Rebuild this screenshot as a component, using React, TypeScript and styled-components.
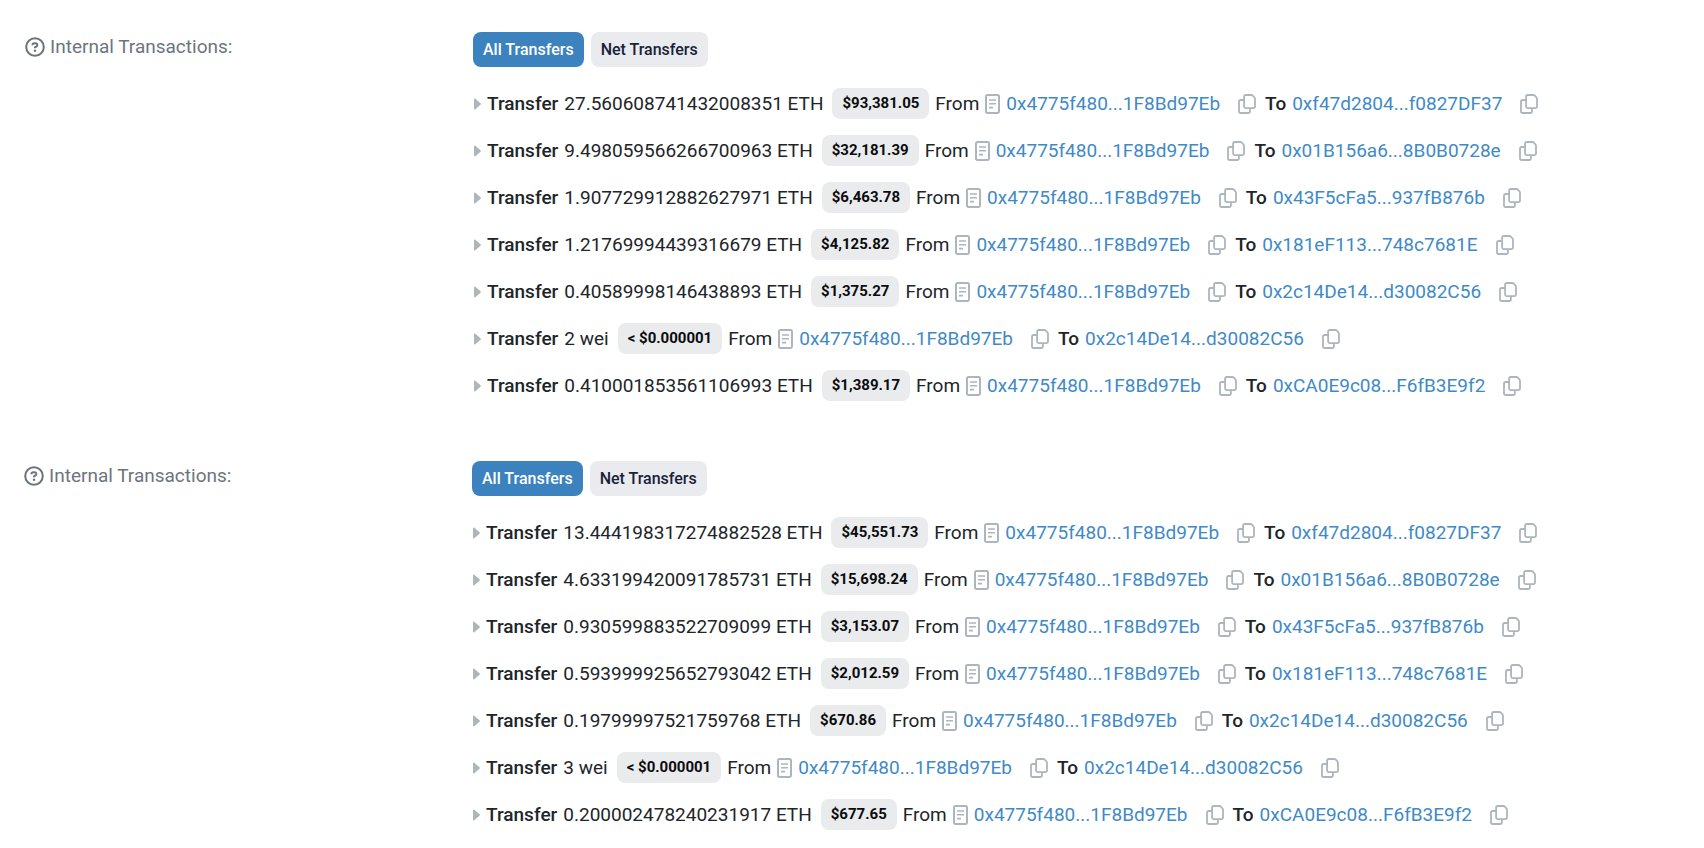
import React from 'react';
import styled, { createGlobalStyle } from 'styled-components';

const GlobalStyle = createGlobalStyle`
  *, *::before, *::after { box-sizing: border-box; }
  body {
    margin: 0;
    background: #fff;
    color: #212529;
    font-family: Roboto, sans-serif;
    font-size: 19px;
    line-height: 28px;
  }
`;

const Page = styled.main`
  display: flex;
  flex-direction: column;
  gap: 52px;
  padding: 32px 24px 8px 25px;
`;

const Section = styled.section<{ $shift?: boolean }>`
  display: grid;
  grid-template-columns: 448px minmax(0, 1fr);
  margin-left: ${(p) => (p.$shift ? '-1px' : '0')};
`;

const Heading = styled.h2`
  display: flex;
  align-items: center;
  gap: 5px;
  height: 30px;
  margin: 0;
  color: #6c757d;
  font-size: 19px;
  font-weight: 400;
`;

const Tabs = styled.div`
  display: flex;
  gap: 7px;
  margin-bottom: 13px;
`;

const Tab = styled.button<{ $active?: boolean }>`
  height: 35px;
  padding: 0 10px;
  border: 0;
  border-radius: 8px;
  background: ${(p) => (p.$active ? '#3b82bf' : '#e9ebee')};
  color: ${(p) => (p.$active ? '#fff' : '#1a2238')};
  font: 500 16px/32px Roboto, sans-serif;
  white-space: nowrap;
  cursor: pointer;
`;

const List = styled.ul`
  margin: 0;
  padding: 0;
  list-style: none;
`;

const Row = styled.li`
  display: flex;
  align-items: center;
  gap: 6px;
  height: 47px;
  white-space: nowrap;
`;

const Strong = styled.span`
  font-weight: 500;
`;

const Amount = styled.span`
  margin-right: 3px;
`;

const Badge = styled.span`
  height: 31px;
  padding: 0 10px;
  border-radius: 8px;
  background: #e9ebed;
  color: #0b0c0e;
  font-size: 15px;
  font-weight: 700;
  line-height: 30px;
`;

const Address = styled.a`
  color: #3f8ac6;
  text-decoration: none;
`;

const CopyButton = styled.button`
  display: flex;
  margin: 0 3px 0 12px;
  padding: 0;
  border: 0;
  background: none;
  color: #adb5bd;
  cursor: pointer;
`;

const Icon = styled.svg`
  display: block;
  flex: none;
  fill: none;
  stroke: currentColor;
`;

const MutedIcon = styled(Icon)`
  color: #adb5bd;
`;

const HelpIcon = () => (
  <Icon width="20" height="20" viewBox="0 0 20 20" strokeWidth="2" aria-hidden="true">
    <circle cx="10" cy="10" r="8.8" />
    <path d="M7.500 8.200V7.800c0-1 .8-1.600 1.800-1.600h1.100c1.100 0 1.900.7 1.900 1.700 0 .8-.4 1.300-1.100 1.700l-1.200.7v1" />
    <circle cx="10" cy="13.800" r="1.200" fill="currentColor" stroke="none" />
  </Icon>
);

const ArrowIcon = () => (
  <MutedIcon width="8" height="12" viewBox="0 0 8 12" aria-hidden="true">
    <path d="M1 1.200v9.600c0 .7.8.9 1.300.5l5.200-4.600c.5-.4.5-1 0-1.400L2.300.7C1.800.3 1 .5 1 1.200z" fill="currentColor" stroke="none" />
  </MutedIcon>
);

const ContractIcon = () => (
  <MutedIcon width="15" height="20" viewBox="0 0 15 20" strokeWidth="2" aria-hidden="true">
    <rect x="1" y="1" width="13" height="18" rx="1.4" />
    <path d="M4 6h7M4 9.800h7M4 13.600h4" strokeWidth="1.6" />
  </MutedIcon>
);

const CopyIcon = () => (
  <Icon width="18" height="20" viewBox="0 0 18 20" strokeWidth="1.8" aria-hidden="true">
    <path d="M7.900 1h5.400c.5 0 1 .2 1.300.5l1.800 1.900c.4.4.6.8.6 1.300v7.600c0 1-.8 1.800-1.800 1.800H7.900c-1 0-1.800-.8-1.800-1.800V2.800c0-1 .8-1.800 1.800-1.800z" />
    <path d="M6.100 6H2.800C1.800 6 1 6.800 1 7.800V17.200c0 1 .8 1.800 1.800 1.800h7.300c1 0 1.800-.8 1.800-1.800v-3" />
  </Icon>
);

type Transfer = { amount: string; value: string; to: string };

const SENDER = '0x4775f480...1F8Bd97Eb';

const groups: Transfer[][] = [
  [
    { amount: '27.560608741432008351 ETH', value: '$93,381.05', to: '0xf47d2804...f0827DF37' },
    { amount: '9.498059566266700963 ETH', value: '$32,181.39', to: '0x01B156a6...8B0B0728e' },
    { amount: '1.907729912882627971 ETH', value: '$6,463.78', to: '0x43F5cFa5...937fB876b' },
    { amount: '1.21769994439316679 ETH', value: '$4,125.82', to: '0x181eF113...748c7681E' },
    { amount: '0.40589998146438893 ETH', value: '$1,375.27', to: '0x2c14De14...d30082C56' },
    { amount: '2 wei', value: '< $0.000001', to: '0x2c14De14...d30082C56' },
    { amount: '0.410001853561106993 ETH', value: '$1,389.17', to: '0xCA0E9c08...F6fB3E9f2' },
  ],
  [
    { amount: '13.444198317274882528 ETH', value: '$45,551.73', to: '0xf47d2804...f0827DF37' },
    { amount: '4.633199420091785731 ETH', value: '$15,698.24', to: '0x01B156a6...8B0B0728e' },
    { amount: '0.930599883522709099 ETH', value: '$3,153.07', to: '0x43F5cFa5...937fB876b' },
    { amount: '0.593999925652793042 ETH', value: '$2,012.59', to: '0x181eF113...748c7681E' },
    { amount: '0.19799997521759768 ETH', value: '$670.86', to: '0x2c14De14...d30082C56' },
    { amount: '3 wei', value: '< $0.000001', to: '0x2c14De14...d30082C56' },
    { amount: '0.200002478240231917 ETH', value: '$677.65', to: '0xCA0E9c08...F6fB3E9f2' },
  ],
];

const TransferRow = ({ amount, value, to }: Transfer) => (
  <Row>
    <ArrowIcon />
    <Strong>Transfer</Strong>
    <Amount>{amount}</Amount>
    <Badge>{value}</Badge>
    <span>From</span>
    <ContractIcon />
    <Address href="#">{SENDER}</Address>
    <CopyButton type="button" aria-label="Copy sender address">
      <CopyIcon />
    </CopyButton>
    <Strong>To</Strong>
    <Address href="#">{to}</Address>
    <CopyButton type="button" aria-label="Copy recipient address">
      <CopyIcon />
    </CopyButton>
  </Row>
);

export default function App() {
  return (
    <>
      <GlobalStyle />
      <Page>
        {groups.map((transfers, index) => (
          <Section key={index} $shift={index > 0}>
            <Heading>
              <HelpIcon />
              Internal Transactions:
            </Heading>
            <div>
              <Tabs>
                <Tab type="button" $active>All Transfers</Tab>
                <Tab type="button">Net Transfers</Tab>
              </Tabs>
              <List>
                {transfers.map((transfer) => (
                  <TransferRow key={transfer.amount} {...transfer} />
                ))}
              </List>
            </div>
          </Section>
        ))}
      </Page>
    </>
  );
}
